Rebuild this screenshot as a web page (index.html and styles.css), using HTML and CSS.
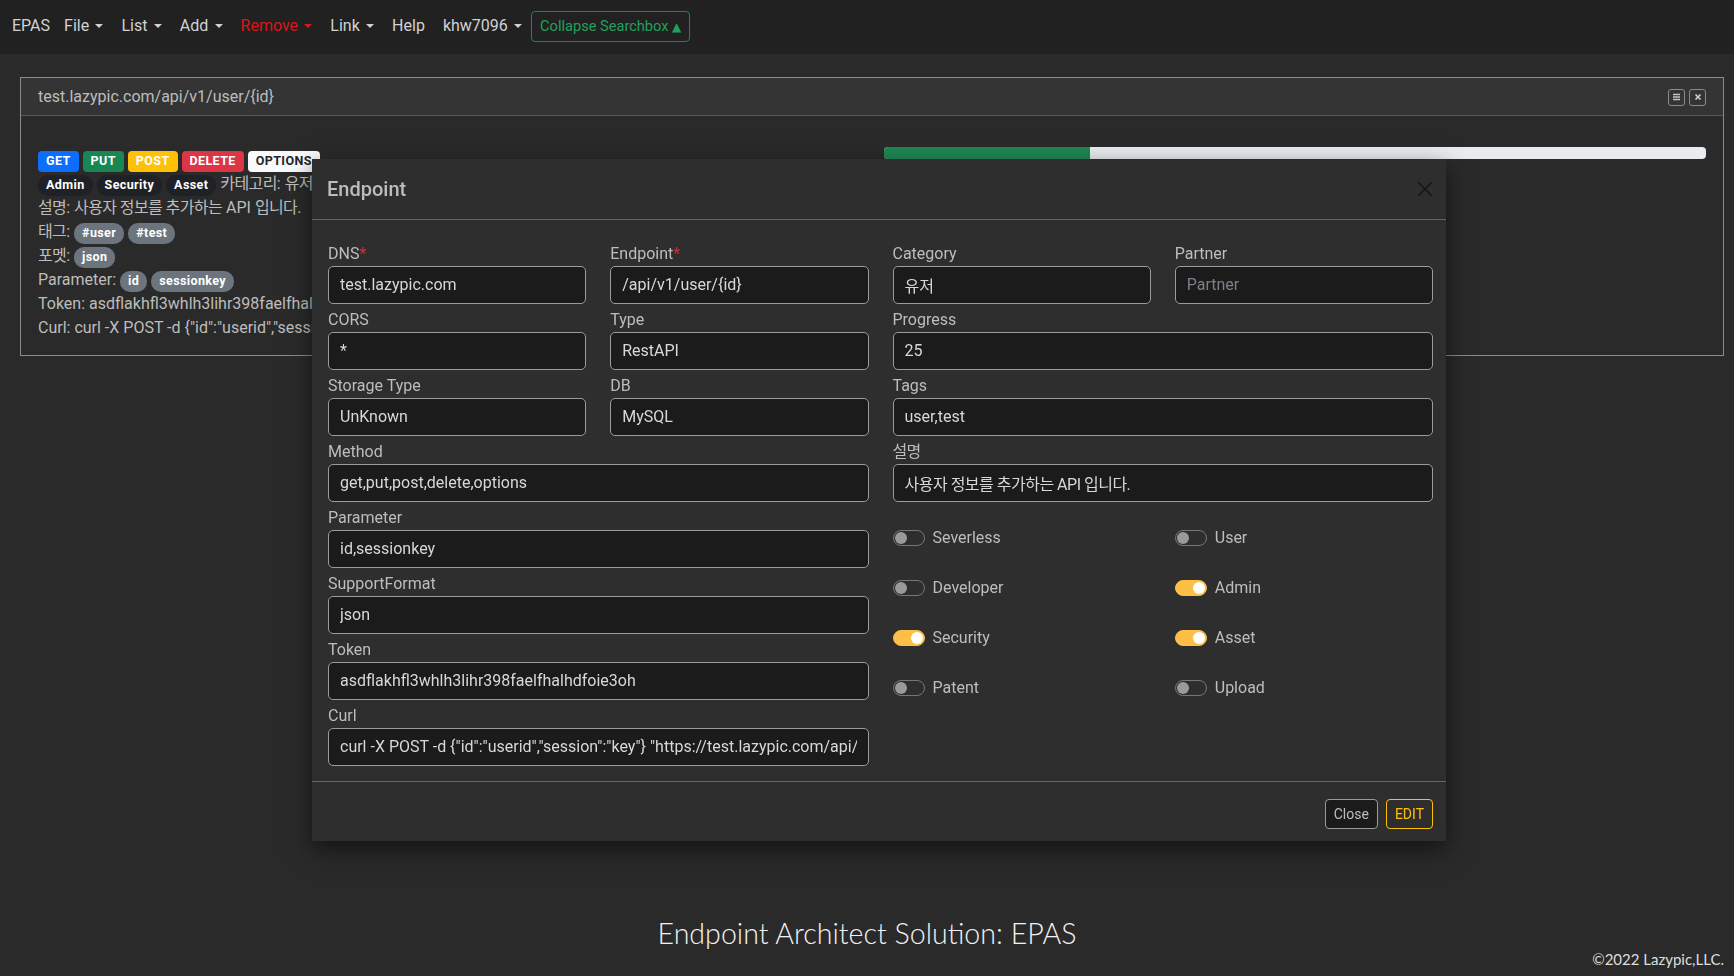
FILE: index.html
```html
<!DOCTYPE html>
<html lang="ko">
<head>
<meta charset="utf-8">
<title>EPAS</title>
<link rel="stylesheet" href="styles.css">
</head>
<body>
<nav class="navbar">
  <span class="brand">EPAS</span>
  <ul class="nav">
    <li class="nav-link">File<span class="caret"></span></li>
    <li class="nav-link">List<span class="caret"></span></li>
    <li class="nav-link">Add<span class="caret"></span></li>
    <li class="nav-link danger">Remove<span class="caret"></span></li>
    <li class="nav-link">Link<span class="caret"></span></li>
    <li class="nav-link">Help</li>
    <li class="nav-link">khw7096<span class="caret"></span></li>
  </ul>
  <button class="btn-search">Collapse Searchbox <span class="tri">▲</span></button>
</nav>

<main class="content">
  <section class="card">
    <header class="card-header">
      <span class="card-title">test.lazypic.com/api/v1/user/{id}</span>
      <div class="card-tools">
        <span class="tool"><svg width="9" height="8" viewBox="0 0 9 8"><path d="M1 1.5h7M1 4h7M1 6.5h7" stroke="#c4c4c4" stroke-width="1.3" fill="none"/></svg></span>
        <span class="tool"><svg width="8" height="8" viewBox="0 0 8 8"><path d="M1.5 1.5l5 5M6.5 1.5l-5 5" stroke="#d0d0d0" stroke-width="1.6" fill="none"/></svg></span>
      </div>
    </header>
    <div class="card-body">
      <div class="info">
        <div class="line"><span class="badge bg-blue">GET</span> <span class="badge bg-green">PUT</span> <span class="badge bg-yellow">POST</span> <span class="badge bg-red">DELETE</span> <span class="badge bg-light">OPTIONS</span></div>
        <div class="line"><span class="badge pill bg-dark">Admin</span> <span class="badge pill bg-dark">Security</span> <span class="badge pill bg-dark">Asset</span> <span class="ko">카테고리</span>: <span class="ko">유저</span></div>
        <div class="line"><span class="ko">설명</span>: <span class="ko">사용자 정보를 추가하는</span> API <span class="ko">입니다</span>.</div>
        <div class="line"><span class="ko">태그</span>: <span class="badge pill bg-gray">#user</span> <span class="badge pill bg-gray">#test</span></div>
        <div class="line"><span class="ko">포멧</span>: <span class="badge pill bg-gray">json</span></div>
        <div class="line">Parameter: <span class="badge pill bg-gray">id</span> <span class="badge pill bg-gray">sessionkey</span></div>
        <div class="line">Token: asdflakhfl3whlh3lihr398faelfhalhdfoie3oh</div>
        <div class="line">Curl: curl -X POST -d {"id":"userid","session":"key"} "https://test.lazypic.com/api/v1/user/{id}"</div>
      </div>
      <div class="progress-col">
        <div class="progress"><div class="progress-bar" style="width:25%"></div></div>
      </div>
    </div>
  </section>
</main>

<footer class="page-footer">
  <p class="footer-title">Endpoint Architect Solution: EPAS</p>
  <p class="copyright">©2022 Lazypic,LLC.</p>
</footer>

<div class="modal">
  <div class="modal-header">
    <h5 class="modal-title">Endpoint</h5>
    <button class="btn-close" aria-label="Close"><svg width="16" height="16" viewBox="0 0 16 16"><path d="M1.5 1.5l13 13M14.5 1.5l-13 13" stroke="#151515" stroke-width="1.6" fill="none"/></svg></button>
  </div>
  <div class="modal-body">
    <div class="half">
      <div class="field"><label class="label">DNS<span class="req">*</span></label><input class="input" value="test.lazypic.com"></div>
      <div class="field"><label class="label">Endpoint<span class="req">*</span></label><input class="input" value="/api/v1/user/{id}"></div>
      <div class="field"><label class="label">CORS</label><input class="input" value="*"></div>
      <div class="field"><label class="label">Type</label><input class="input" value="RestAPI"></div>
      <div class="field"><label class="label">Storage Type</label><input class="input" value="UnKnown"></div>
      <div class="field"><label class="label">DB</label><input class="input" value="MySQL"></div>
      <div class="field span2"><label class="label">Method</label><input class="input" value="get,put,post,delete,options"></div>
      <div class="field span2"><label class="label">Parameter</label><input class="input" value="id,sessionkey"></div>
      <div class="field span2"><label class="label">SupportFormat</label><input class="input" value="json"></div>
      <div class="field span2"><label class="label">Token</label><input class="input" value="asdflakhfl3whlh3lihr398faelfhalhdfoie3oh"></div>
      <div class="field span2"><label class="label">Curl</label><input class="input" value='curl -X POST -d {"id":"userid","session":"key"} "https://test.lazypic.com/api/v1/user/{id}"'></div>
    </div>
    <div class="half">
      <div class="field"><label class="label">Category</label><input class="input" value="유저"></div>
      <div class="field"><label class="label">Partner</label><input class="input" placeholder="Partner"></div>
      <div class="field span2"><label class="label">Progress</label><input class="input" value="25"></div>
      <div class="field span2"><label class="label">Tags</label><input class="input" value="user,test"></div>
      <div class="field span2"><label class="label"><span class="ko">설명</span></label><input class="input input-ko" value="사용자 정보를 추가하는 API 입니다."></div>
      <div class="switches">
        <div class="switch-item"><span class="switch"></span><span>Severless</span></div>
        <div class="switch-item"><span class="switch"></span><span>User</span></div>
        <div class="switch-item"><span class="switch"></span><span>Developer</span></div>
        <div class="switch-item"><span class="switch on"></span><span>Admin</span></div>
        <div class="switch-item"><span class="switch on"></span><span>Security</span></div>
        <div class="switch-item"><span class="switch on"></span><span>Asset</span></div>
        <div class="switch-item"><span class="switch"></span><span>Patent</span></div>
        <div class="switch-item"><span class="switch"></span><span>Upload</span></div>
      </div>
    </div>
  </div>
  <div class="modal-footer">
    <button class="btn-sm btn-close-dark">Close</button>
    <button class="btn-sm btn-edit">EDIT</button>
  </div>
</div>
</body>
</html>
```

FILE: styles.css
```css
* { box-sizing: border-box; }
html, body { margin: 0; }
body {
  background: #2a2a2a;
  color: #bdbdbd;
  font-family: Roboto, "Noto Sans CJK KR", sans-serif;
  font-size: 16px;
  line-height: 24px;
  min-height: 100vh;
  display: flex;
  flex-direction: column;
}
.ko { letter-spacing: -0.6px; }

/* navbar */
.navbar {
  flex-shrink: 0;
  height: 54px;
  background: #212121;
  display: flex;
  align-items: center;
  padding: 0 12px 2px;
}
.brand { color: #d2d2d2; margin-right: 5px; }
.nav { list-style: none; margin: 0; padding: 0; display: flex; }
.nav-link { padding: 0 9px; color: #d2d2d2; display: flex; align-items: center; }
.nav-link.danger { color: #d8161c; }
.caret {
  display: inline-block;
  margin-left: 6.3px;
  border-top: 4.5px solid currentColor;
  border-left: 4px solid transparent;
  border-right: 4px solid transparent;
}
.btn-search {
  font-family: Roboto, sans-serif;
  font-size: 14.6px;
  line-height: 20px;
  height: 31px;
  padding: 4px 8px;
  color: #21a05c;
  background: transparent;
  border: 1px solid #198754;
  border-radius: 4px;
}
.tri { font-family: "DejaVu Sans", sans-serif; font-size: 12px; }

/* card */
.content { padding: 23px 10px 0 20px; }
.card { border: 1px solid #8c8b84; background: #2a2a2a; }
.card-header {
  display: flex;
  align-items: center;
  justify-content: space-between;
  background: #343434;
  border-bottom: 1px solid #585858;
  padding: 7px 17px 6px;
}
.card-tools { display: flex; gap: 4px; }
.tool {
  width: 17px;
  height: 17px;
  border: 1px solid #8a8a8a;
  border-radius: 3px;
  display: flex;
  align-items: center;
  justify-content: center;
}
.card-body {
  display: grid;
  grid-template-columns: 1fr 1fr;
  column-gap: 24px;
  align-items: start;
  padding: 16px 17px 15px;
}
.info { padding-top: 16px; white-space: nowrap; min-width: 0; }
.line { height: 24px; }
.badge {
  display: inline-block;
  padding: 4.2px 8px;
  font-size: 12.5px;
  font-weight: 700;
  line-height: 1;
  color: #fff;
  border-radius: 4px;
  letter-spacing: 0.4px;
}
.pill { border-radius: 10px; }
.bg-blue { background: #0d6efd; }
.bg-green { background: #198754; }
.bg-yellow { background: #ffc107; }
.bg-red { background: #dc3545; }
.bg-light { background: #f8f9fa; color: #212529; }
.bg-dark { background: #1e2125; }
.bg-gray { background: #6c757d; }
.progress {
  margin-top: 15px;
  height: 12px;
  background: #e9ecef;
  border-radius: 4px;
  overflow: hidden;
}
.progress-bar { height: 100%; background: #1e8754; }

/* page footer */
.page-footer { margin-top: auto; padding: 0 10px 9px; }
.footer-title {
  margin: 0;
  font-family: Lato, sans-serif;
  font-weight: 300;
  font-size: 28.6px;
  line-height: 28px;
  text-align: center;
  color: #f2f2f2;
}
.copyright {
  margin: 4px 0 0;
  font-family: Lato, sans-serif;
  font-size: 15px;
  line-height: 16px;
  text-align: right;
  color: #dedede;
}

/* modal */
.modal {
  position: fixed;
  left: 312px;
  top: 159px;
  width: 1134px;
  background: #2e2e2e;
  box-shadow: 0 8px 22px rgba(0, 0, 0, .55);
}
.modal-header {
  height: 61px;
  display: flex;
  align-items: center;
  justify-content: space-between;
  padding: 0 13px 0 15px;
  border-bottom: 1px solid #666;
}
.modal-title {
  margin: 0;
  font-size: 20px;
  font-weight: 500;
  line-height: 24px;
  color: #bdbdbd;
}
.btn-close {
  width: 16px;
  height: 16px;
  padding: 0;
  border: 0;
  background: none;
  display: flex;
}
.modal-body {
  display: grid;
  grid-template-columns: 1fr 1fr;
  column-gap: 24px;
  padding: 21.5px 13px 11.5px 16px;
}
.half {
  display: grid;
  grid-template-columns: 1fr 1fr;
  column-gap: 24px;
  align-content: start;
  min-width: 0;
}
.field { margin-bottom: 4px; min-width: 0; }
.span2 { grid-column: span 2; }
.label { display: block; color: #bdbdbd; }
.req { color: #dc2a2a; }
.input {
  display: block;
  width: 100%;
  height: 38px;
  margin: 0;
  background: #1b1b1b;
  border: 1px solid #9d9c94;
  border-radius: 5px;
  padding: 0 11px;
  font-family: Roboto, "Noto Sans CJK KR", sans-serif;
  font-size: 16px;
  color: #d8d8d8;
  outline: none;
}
.input::placeholder { color: #7b8089; }
.input-ko { letter-spacing: -0.5px; }
.switches {
  grid-column: span 2;
  display: grid;
  grid-template-columns: 1fr 1fr;
  column-gap: 24px;
  padding-top: 7px;
}
.switch-item { height: 50px; display: flex; align-items: center; gap: 8px; }
.switch {
  position: relative;
  width: 32px;
  height: 16px;
  border: 1px solid #777;
  border-radius: 8px;
}
.switch::after {
  content: "";
  position: absolute;
  top: 1px;
  left: 1px;
  width: 12px;
  height: 12px;
  border-radius: 50%;
  background: #9a9a9a;
}
.switch.on { background: #fdbf45; border-color: #fdbf45; }
.switch.on::after { left: 17px; background: #fff; }

.modal-footer {
  height: 60px;
  border-top: 1px solid #666;
  display: flex;
  justify-content: flex-end;
  align-items: flex-end;
  gap: 8px;
  padding: 0 13px 12px;
}
.btn-sm {
  font-family: Roboto, sans-serif;
  font-size: 14px;
  line-height: 20px;
  height: 30px;
  padding: 4px 8px;
  border-radius: 4px;
}
.btn-close-dark { background: #1b1b1b; border: 1px solid #9d9c94; color: #bdbdbd; }
.btn-edit { background: transparent; border: 1px solid #ffc107; color: #ffc107; }
```
